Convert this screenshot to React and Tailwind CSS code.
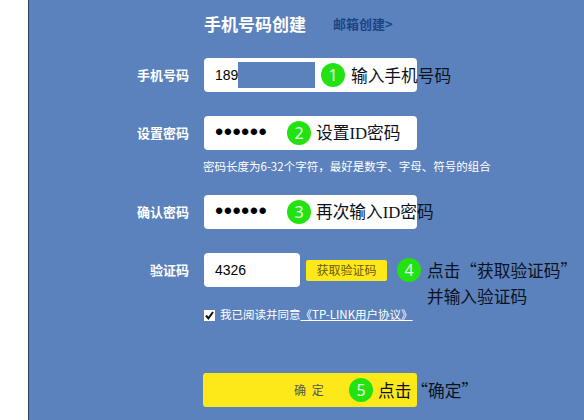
const cjk = "font-['Noto_Sans_CJK_SC',sans-serif]";

function Step({ n, className = '' }) {
  return (
    <span className={`flex h-[24px] w-[24px] shrink-0 items-center justify-center rounded-full bg-[#22e311] font-['Noto_Sans',sans-serif] text-[16px] leading-none text-[#e8ffe0] ${className}`}>
      {n}
    </span>
  );
}

function Note({ children, className = '' }) {
  return (
    <span className={`shrink-0 whitespace-nowrap text-[16.7px] leading-[26px] text-[#0b1220] ${cjk} ${className}`}>
      {children}
    </span>
  );
}

function Id() {
  return <span className="font-['Liberation_Serif',serif]">ID</span>;
}

function Row({ label, children, className = '' }) {
  return (
    <div className={`flex h-[34px] items-center ${className}`}>
      <div className={`w-[160px] text-right text-[13px] font-bold text-white ${cjk}`}>{label}</div>
      <div className="ml-[15px] flex h-full items-center">{children}</div>
    </div>
  );
}

function Dots() {
  return <span className="w-[83px] shrink-0 pl-[11px] font-['Liberation_Sans',sans-serif] text-[23.7px] leading-none tracking-[0.4px] text-black">••••••</span>;
}

export default function App() {
  return (
    <div className="flex h-[420px] w-[584px] overflow-hidden bg-white">
      <div className="w-[28px] shrink-0 bg-white" />
      <div className="flex-1 border-l border-[#33415c] bg-[#5b82bc]">
        <div className={`ml-[175px] mt-[12px] flex h-[24px] items-center ${cjk}`}>
          <h1 className="text-[17px] font-bold text-white">手机号码创建</h1>
          <a className="ml-[27px] text-[13px] font-bold text-[#1d4585]">邮箱创建&gt;</a>
        </div>

        <Row label="手机号码" className="mt-[22px]">
          <div className="flex h-[34px] w-[213px] shrink-0 items-center rounded-[4px] bg-white pl-[11px]">
            <span className="w-[23px] shrink-0 font-['Liberation_Sans',sans-serif] text-[14px] text-black">189</span>
            <span className="h-[26px] w-[77px] shrink-0 bg-[#5b82bc]" />
            <Step n="1" className="ml-[6px]" />
            <Note className="ml-[6px]">输入手机号码</Note>
          </div>
        </Row>

        <Row label="设置密码" className="mt-[24px]">
          <div className="flex h-[34px] w-[213px] shrink-0 items-center rounded-[4px] bg-white">
            <Dots />
            <Step n="2" />
            <Note className="ml-[5px]">设置<Id />密码</Note>
          </div>
        </Row>

        <div className={`ml-[174px] flex h-[45px] items-start pt-[8px] text-[11.5px] leading-[16px] text-white ${cjk}`}>
          密码长度为6-32个字符，最好是数字、字母、符号的组合
        </div>

        <Row label="确认密码">
          <div className="flex h-[34px] w-[213px] shrink-0 items-center rounded-[4px] bg-white">
            <Dots />
            <Step n="3" />
            <Note className="ml-[5px]">再次输入<Id />密码</Note>
          </div>
        </Row>

        <Row label="验证码" className="mt-[24px]">
          <div className="flex h-[34px] w-[96px] shrink-0 items-center rounded-[4px] bg-white pl-[11px] font-['Liberation_Sans',sans-serif] text-[14px] text-black">
            4326
          </div>
          <button className={`ml-[6px] h-[21px] w-[81px] shrink-0 rounded-[2px] bg-[#fde81a] text-[12px] text-[#6a5a12] ${cjk}`}>
            获取验证码
          </button>
          <Step n="4" className="ml-[10px]" />
          <div className="ml-[6px] flex h-[34px] shrink-0 flex-col pt-[4px]">
            <Note>点击“获取验证码”</Note>
            <Note>并输入验证码</Note>
          </div>
        </Row>

        <div className={`ml-[175px] mt-[21px] flex h-[14px] items-center text-[11.5px] text-white ${cjk}`}>
          <span className="flex h-[11px] w-[11px] shrink-0 items-center justify-center bg-white">
            <svg viewBox="0 0 11 11" className="h-[11px] w-[11px]">
              <path d="M2 5.5 L4.4 8.4 L9 2" fill="none" stroke="#111" strokeWidth="2" />
            </svg>
          </span>
          <span className="ml-[5px]">我已阅读并同意</span>
          <a className="underline">《TP-LINK用户协议》</a>
        </div>

        <div className="ml-[174px] mt-[51px] flex h-[34px] w-[214px] shrink-0 items-center rounded-[3px] bg-[#fde81a] pl-[91px]">
          <span className={`w-[55px] shrink-0 text-[12px] tracking-[1.5px] text-[#555] ${cjk}`}>确 定</span>
          <Step n="5" />
          <Note className="ml-[5px]">点击“确定”</Note>
        </div>
      </div>
    </div>
  );
}
